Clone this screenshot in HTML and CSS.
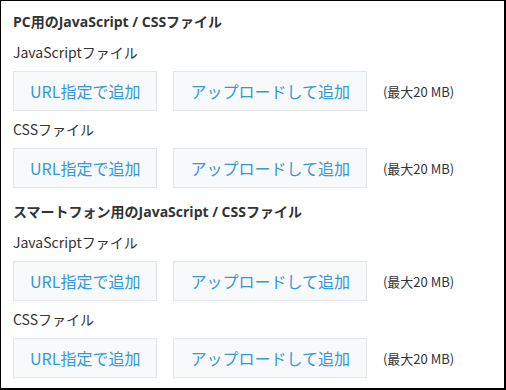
FILE: index.html
```html
<!DOCTYPE html>
<html lang="ja">
<head>
    <meta charset="UTF-8">
    <title>JavaScript / CSSでカスタマイズ</title>
    <link rel="stylesheet" href="styles.css">
</head>
<body>
    <div class="panel">
        <div class="section">
            <h2 class="section-title">PC用のJavaScript / CSSファイル</h2>
            <div class="field-label">JavaScriptファイル</div>
            <div class="upload-row">
                <button class="btn">URL指定で追加</button>
                <button class="btn">アップロードして追加</button>
                <span class="size-note">(最大20 MB)</span>
            </div>
            <div class="field-label">CSSファイル</div>
            <div class="upload-row">
                <button class="btn">URL指定で追加</button>
                <button class="btn">アップロードして追加</button>
                <span class="size-note">(最大20 MB)</span>
            </div>
        </div>

        <div class="section">
            <h2 class="section-title">スマートフォン用のJavaScript / CSSファイル</h2>
            <div class="field-label">JavaScriptファイル</div>
            <div class="upload-row">
                <button class="btn">URL指定で追加</button>
                <button class="btn">アップロードして追加</button>
                <span class="size-note">(最大20 MB)</span>
            </div>
            <div class="field-label">CSSファイル</div>
            <div class="upload-row">
                <button class="btn">URL指定で追加</button>
                <button class="btn">アップロードして追加</button>
                <span class="size-note">(最大20 MB)</span>
            </div>
        </div>
    </div>
</body>
</html>
```

FILE: styles.css
```css
* {
    margin: 0;
    padding: 0;
    box-sizing: border-box;
}

body {
    font-family: "Noto Sans CJK JP", "Noto Sans", sans-serif;
    color: #333;
    background: #fff;
}

.panel {
    width: 506px;
    height: 390px;
    border: 1px solid #000;
    border-right-width: 2px;
    border-bottom-width: 2px;
    padding: 11px 12px 0;
    overflow: hidden;
}

.section + .section {
    padding-top: 6px;
}

.section-title {
    font-family: "Open Sans", "Noto Sans CJK JP", sans-serif;
    font-size: 14px;
    font-weight: 700;
    line-height: 20px;
    margin-bottom: 10px;
}

.field-label {
    font-size: 14px;
    line-height: 20px;
    margin-bottom: 9px;
}

.upload-row {
    display: flex;
    align-items: center;
    gap: 16px;
    margin-bottom: 8px;
}

.btn {
    height: 40px;
    padding: 0 16px;
    font-family: inherit;
    font-size: 16px;
    color: #3498db;
    background: #f7f9fa;
    border: 1px solid #e3e7e8;
    cursor: pointer;
}

.size-note {
    font-size: 13px;
    color: #333;
}
```
